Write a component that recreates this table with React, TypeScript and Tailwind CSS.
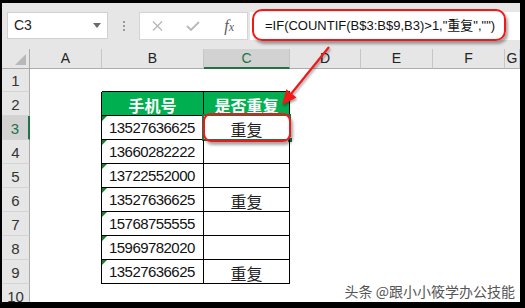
import React from 'react';

const COLS = [
  { name: 'A', width: 'w-[72px]' },
  { name: 'B', width: 'w-[102px]' },
  { name: 'C', width: 'w-[86px]' },
  { name: 'D', width: 'w-[71px]' },
  { name: 'E', width: 'w-[72px]' },
  { name: 'F', width: 'w-[72px]' },
  { name: 'G', width: 'w-[15px]' },
];

const DATA = [
  { phone: '13527636625', dup: true },
  { phone: '13660282222', dup: false },
  { phone: '13722552000', dup: false },
  { phone: '13527636625', dup: true },
  { phone: '15768755555', dup: false },
  { phone: '15969782020', dup: false },
  { phone: '13527636625', dup: true },
];

const ROWS = [1, 2, 3, 4, 5, 6, 7, 8, 9, 10];

function FormulaBar() {
  return (
    <div className="flex h-[46px] shrink-0 items-start bg-[#e6e6e6] pt-[9px]">
      <div className="ml-[5px] flex h-[27px] w-[101px] items-center justify-between border border-[#d0d0d0] bg-white pl-[6px] pr-[6px] font-['Liberation_Sans',sans-serif] text-[14px] text-[#222]">
        <span>C3</span>
        <svg width="8" height="5" viewBox="0 0 8 5">
          <path d="M0 0 L8 0 L4 5 Z" fill="#6b6b6b" />
        </svg>
      </div>
      <div className="flex h-[27px] w-[31px] flex-col items-center justify-center gap-[2px]">
        <span className="h-[2px] w-[2px] bg-[#9a9a9a]" />
        <span className="h-[2px] w-[2px] bg-[#9a9a9a]" />
        <span className="h-[2px] w-[2px] bg-[#9a9a9a]" />
      </div>
      <div className="grid h-[28px] w-[109px] grid-cols-3 items-center border border-[#d4d4d4] bg-white">
        <div className="flex justify-center">
          <svg width="11" height="10" viewBox="0 0 11 10">
            <path d="M1 0.5 L10 9.5 M10 0.5 L1 9.5" stroke="#b8b8b8" strokeWidth="1.4" fill="none" />
          </svg>
        </div>
        <div className="flex justify-center">
          <svg width="14" height="10" viewBox="0 0 14 10">
            <path d="M1 5 L5 9 L13 1" stroke="#b8b8b8" strokeWidth="1.8" fill="none" />
          </svg>
        </div>
        <div className="flex justify-center font-['Liberation_Serif',serif] italic text-[#5c5c5c]">
          <span className="text-[16px] leading-none">f</span>
          <span className="mt-[3px] text-[12px] leading-none">x</span>
        </div>
      </div>
      <div className="ml-[2px] flex h-[28px] flex-1 items-center bg-white pl-[15px] font-['Liberation_Sans','Noto_Sans_CJK_SC',sans-serif] text-[13px] text-[#111]">
        =IF(COUNTIF(B$3:B$9,B3)&gt;1,"重复","")
      </div>
    </div>
  );
}

function ColumnHeader() {
  return (
    <div className="flex h-[20px] shrink-0 font-['Liberation_Sans',sans-serif] text-[14px]">
      <div className="relative w-[28px] shrink-0 border-b border-r border-b-[#ababab] border-r-[#ababab] bg-[#e6e6e6]">
        <svg className="absolute bottom-[3px] right-[3px]" width="11" height="11" viewBox="0 0 11 11">
          <path d="M11 0 L11 11 L0 11 Z" fill="#b8b8b8" />
        </svg>
      </div>
      {COLS.map(col =>
        col.name === 'C' ? (
          <div key={col.name} className={`${col.width} flex shrink-0 items-center justify-center border-b-2 border-r border-b-[#217346] border-r-[#c6c6c6] bg-[#d2d2d2] pt-[1px] text-[#217346]`}>
            {col.name}
          </div>
        ) : (
          <div key={col.name} className={`${col.width} flex shrink-0 items-center justify-center border-b border-r border-b-[#ababab] border-r-[#c6c6c6] bg-[#e6e6e6] text-[#222]`}>
            {col.name}
          </div>
        )
      )}
    </div>
  );
}

function PhoneCell({ row }: { row: number }) {
  if (row === 1) return <div className="w-[102px] shrink-0 border-b border-black" />;
  if (row === 2) {
    return (
      <div className="flex w-[102px] shrink-0 items-center justify-center border-b border-r border-black bg-[#00b050] pt-[2px] font-['Noto_Sans_CJK_SC',sans-serif] text-[16px] font-bold text-white">
        手机号
      </div>
    );
  }
  if (row > 9) return <div className="w-[102px] shrink-0" />;
  return (
    <div className="relative flex w-[102px] shrink-0 items-center border-b border-r border-black pl-[7px] pt-[2px] font-['Liberation_Sans',sans-serif] text-[15px] tracking-[-0.55px] text-[#111]">
      <span className="absolute left-0 top-0 h-0 w-0 border-r-[5px] border-t-[5px] border-r-transparent border-t-[#1e7b34]" />
      {DATA[row - 3].phone}
    </div>
  );
}

function DupCell({ row }: { row: number }) {
  if (row === 1) return <div className="w-[86px] shrink-0 border-b border-black" />;
  if (row === 2) {
    return (
      <div className="flex w-[86px] shrink-0 items-center justify-center border-b border-r border-black bg-[#00b050] pt-[2px] font-['Noto_Sans_CJK_SC',sans-serif] text-[16px] font-bold text-white">
        是否重复
      </div>
    );
  }
  if (row > 9) return <div className="w-[86px] shrink-0" />;
  return (
    <div className="relative flex w-[86px] shrink-0 items-center justify-center border-b border-r border-black pt-[2px] font-['Noto_Sans_CJK_SC',sans-serif] text-[16px] text-[#222]">
      {row === 3 ? (
        <>
          <span className="absolute -left-[2px] -top-[2px] bottom-[-2px] right-[-2px] border-2 border-[#217346]" />
          <span className="absolute -bottom-[4px] -right-[4px] h-[6px] w-[6px] border border-white bg-[#217346]" />
        </>
      ) : null}
      {DATA[row - 3].dup ? '重复' : ''}
    </div>
  );
}

function SheetRow({ row }: { row: number }) {
  const selected = row === 3;
  const inTable = row >= 2 && row <= 9;

  return (
    <div className={`flex shrink-0 ${row === 1 ? 'h-[23px]' : 'h-[24px]'}`}>
      <div
        className={`flex w-[28px] shrink-0 items-end justify-center border-b border-b-[#d4d4d4] pb-[1px] font-['Liberation_Sans',sans-serif] text-[15px] leading-[18px] ${
          selected ? 'border-r-2 border-r-[#217346] bg-[#d2d2d2] text-[#217346]' : 'border-r border-r-[#ababab] bg-[#e6e6e6] text-[#333]'
        }`}
      >
        {row}
      </div>
      <div className={`w-[72px] shrink-0 ${inTable ? 'border-r border-black' : ''}`} />
      <PhoneCell row={row} />
      <DupCell row={row} />
      <div className="w-[71px] shrink-0" />
      <div className="w-[72px] shrink-0" />
      <div className="w-[72px] shrink-0" />
      <div className="w-[15px] shrink-0" />
    </div>
  );
}

function Annotations() {
  return (
    <>
      <div className="pointer-events-none absolute left-[250px] top-[6px] h-[32px] w-[254px] rounded-[10px] border-[2.5px] border-[#f01818] shadow-[2px_3px_3px_rgba(0,0,0,0.35)]" />
      <div className="pointer-events-none absolute left-[201px] top-[110px] h-[29px] w-[88px] rounded-[8px] border-[2.5px] border-[#f01818] shadow-[2px_3px_3px_rgba(0,0,0,0.35)]" />
      <svg
        className="pointer-events-none absolute left-0 top-0 drop-shadow-[1px_2px_1px_rgba(0,0,0,0.35)]"
        width="518"
        height="299"
        viewBox="0 0 518 299"
      >
        <line x1="327" y1="44" x2="289" y2="91" stroke="#f01818" strokeWidth="2.2" />
        <path d="M280 102 L294.5 94.4 L284.4 86.3 Z" fill="#f01818" />
      </svg>
      <div className="pointer-events-none absolute bottom-[3px] right-[5px] font-['Noto_Sans_CJK_SC',sans-serif] text-[14px] leading-[16px] text-[#555] [text-shadow:0_0_2px_#fff,0_0_2px_#fff]">
        头条 @跟小小筱学办公技能
      </div>
    </>
  );
}

export default function App() {
  return (
    <div className="h-[308px] w-[525px] overflow-hidden bg-black pb-[6px] pl-[2px] pr-[5px] pt-[3px]">
      <div className="relative flex h-full flex-col overflow-hidden bg-white">
        <FormulaBar />
        <ColumnHeader />
        {ROWS.map(row => (
          <SheetRow key={row} row={row} />
        ))}
        <Annotations />
      </div>
    </div>
  );
}
